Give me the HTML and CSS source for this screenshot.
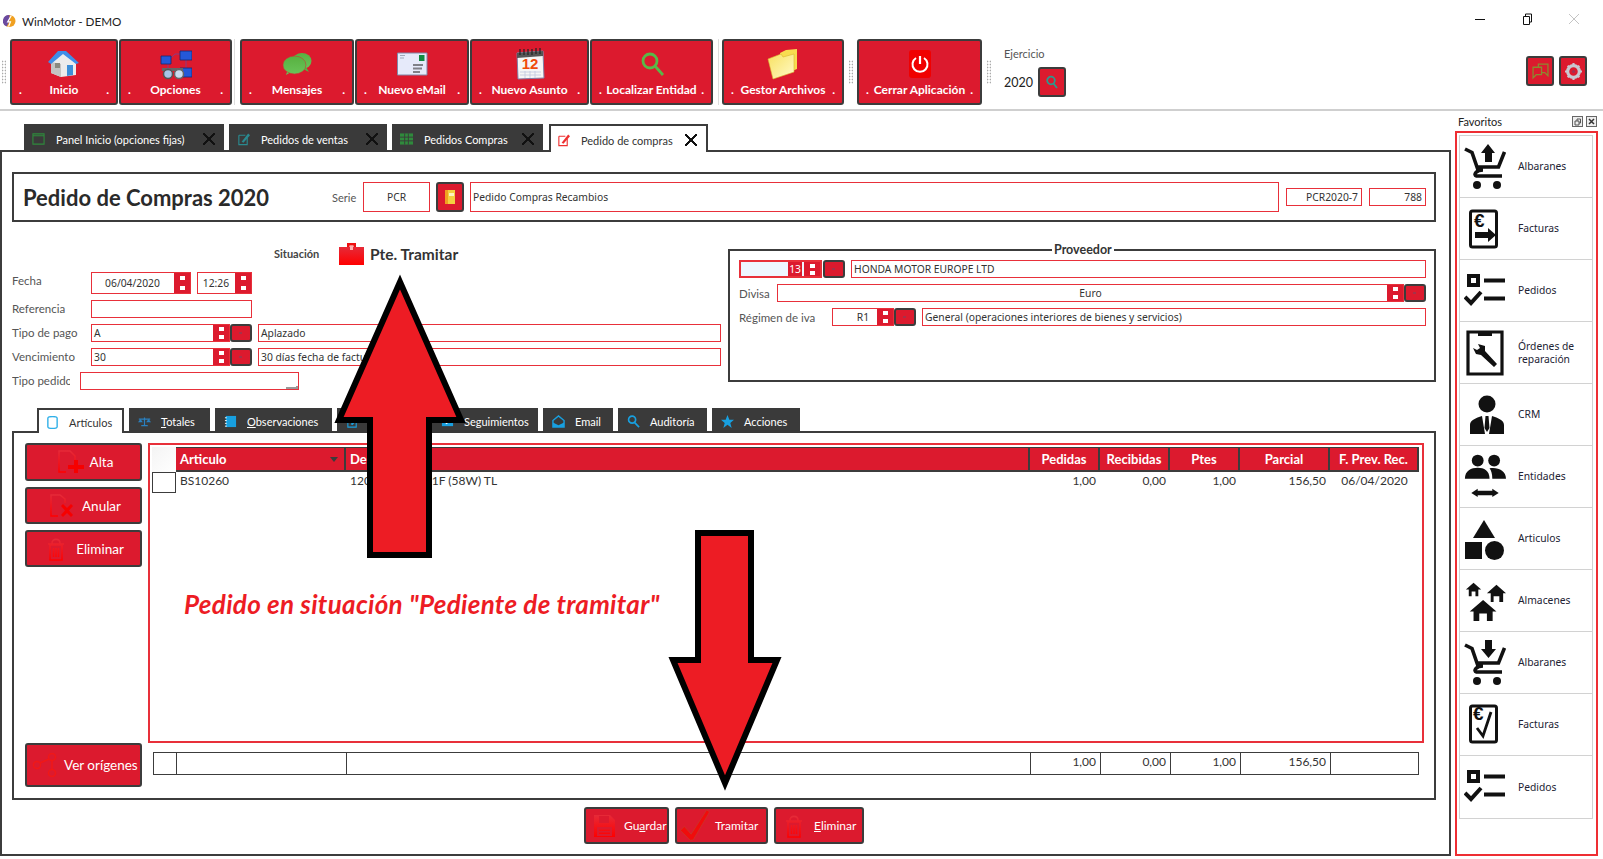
FILE: index.html
```html
<!DOCTYPE html>
<html>
<head lang="es">
    <meta charset="UTF-8">
    <title>WinMotor - DEMO</title>
    <link rel="stylesheet" href="styles.css">
</head>
<body>
<svg class="defs">
    <defs>
        <linearGradient id="redfade" x1="0" y1="0" x2="0" y2="1">
            <stop offset="0" stop-color="#e62a38"/>
            <stop offset="1" stop-color="#ff0000"/>
        </linearGradient>
        <linearGradient id="yellowfade" x1="0" y1="0" x2="1" y2="1">
            <stop offset="0" stop-color="#f8e060"/>
            <stop offset="1" stop-color="#fffbc8"/>
        </linearGradient>
        <linearGradient id="greenfade" x1="0" y1="0" x2="0" y2="1">
            <stop offset="0" stop-color="#58b040"/>
            <stop offset="1" stop-color="#68c458"/>
        </linearGradient>
    </defs>
    <symbol id="cart" viewBox="0 0 42 46">
        <path d="M1 5L8 8.5L14 26M13 23H34.500L40.500 8M19 26C12 26 9 31 12.500 32H38" fill="none" stroke="#111" stroke-width="3.600"/>
        <circle cx="13" cy="41" r="4"/><circle cx="33" cy="41" r="4"/>
    </symbol>
    <symbol id="tasks" viewBox="0 0 42 34">
        <path d="M3 0H16V13H3ZM7 4V9H12V4Z" fill-rule="evenodd"/>
        <path d="M20 4.500H41V8.500H20ZM20 22.500H41V26.500H20Z"/>
        <path d="M1 23L7 29L17 18" fill="none" stroke="#111" stroke-width="4"/>
    </symbol>
    <symbol id="trash" viewBox="0 0 18 24">
        <path d="M3 8H15V23H3ZM1 7H17M5 6.500C5 1 13 1 13 6.500M6.500 11V20M9 11V20M11.500 11V20" fill="none" stroke="url(#redfade)" stroke-width="1.600"/>
    </symbol>
</svg>

<div class="page">
    <div class="titlebar">
        <svg class="appicon" viewBox="0 0 14 14">
            <circle cx="7" cy="7" r="6.500" fill="#f0a020"/>
            <path d="M7 .5A6.500 6.500 0 0 0 4 13L7 7Z" fill="#6a4aa0"/>
            <path d="M9 1L5 8H8L6 13" fill="none" stroke="#fff" stroke-width="1.300"/>
        </svg>
        <span class="apptitle">WinMotor - DEMO</span>
        <div class="winctl">
            <svg viewBox="0 0 12 12"><path d="M1 6.500H11" stroke="#111" stroke-width="1"/></svg>
            <svg viewBox="0 0 12 12"><path d="M2.500 3.500H8.500V11.500H2.500ZM4.500 3.500V1H10.500V9H8.500" fill="none" stroke="#111"/></svg>
            <svg viewBox="0 0 12 12"><path d="M1 1L11 11M11 1L1 11" stroke="#c4c4c4"/></svg>
        </div>
    </div>

    <div class="toolbar">
        <div class="grip first"></div>
        <a class="tbtn w108">
            <svg viewBox="0 0 32 32">
                <path d="M3 14L15 5L28 15V27L13 29L3 25Z" fill="#ececec"/>
                <path d="M13 16V29L3 25V14Z" fill="#c4c4c4"/>
                <path d="M7 15H12V20H7Z" fill="#8a8a80"/>
                <path d="M19 17H25V27L19 28Z" fill="#3d8fd8"/>
                <path d="M0 14L10 3H18L31 15L28 16L15 6L3 16Z" fill="#3f8ee8"/>
            </svg>
            <span class="tlabel"><b>.</b><b>Inicio</b><b>.</b></span>
        </a>
        <a class="tbtn w113">
            <svg viewBox="0 0 32 32">
                <path d="M11 10L15 6H20M8 16V20M26 12V20" fill="none" stroke="#8a3a80"/>
                <path d="M20 3H32V12H20ZM1 8H11V16H1ZM20 20H32V29H20Z" fill="#2458d8" stroke="#182870" stroke-width=".8"/>
                <path d="M2 20H23V23H2Z" fill="#666"/>
                <circle cx="8" cy="26" r="4.500" fill="#a8c4e8" stroke="#555" stroke-width="1.500"/>
                <circle cx="19" cy="26" r="4.500" fill="#c8dcf0" stroke="#666" stroke-width="1.500"/>
            </svg>
            <span class="tlabel"><b>.</b><b>Opciones</b><b>.</b></span>
        </a>
        <div class="sep"></div>
        <a class="tbtn w114">
            <svg viewBox="0 0 32 32">
                <ellipse cx="21" cy="13" rx="9.500" ry="8" fill="url(#greenfade)"/>
                <path d="M25 19L28 24L22 21Z" fill="#58b040"/>
                <path d="M10 24L5 27L7 21Z" fill="#68c458"/>
                <ellipse cx="13.500" cy="17" rx="11.500" ry="9" fill="url(#greenfade)" stroke="#c43a34" stroke-width=".6"/>
            </svg>
            <span class="tlabel"><b>.</b><b>Mensajes</b><b>.</b></span>
        </a>
        <a class="tbtn w114">
            <svg viewBox="0 0 32 32">
                <path d="M1.500 5H31V27H1.500Z" fill="#e6eafa" stroke="#8088a8"/>
                <path d="M23 7H28.500V13H23Z" fill="#128a40"/>
                <path d="M4 7.500H9M4 10H8" stroke="#a0a8b8"/>
                <path d="M17 17H27M17 20.500H26M17 24H24" stroke="#808088" stroke-width="1.800"/>
            </svg>
            <span class="tlabel"><b>.</b><b>Nuevo eMail</b><b>.</b></span>
        </a>
        <a class="tbtn w119">
            <svg viewBox="0 0 32 32">
                <path d="M3 5L29 3L30 30L4 31Z" fill="#f6f6f6" stroke="#8080a8"/>
                <path d="M3 5L29 3V8L3 10Z" fill="#555"/>
                <path d="M6 1V7M10 1V7M14 1V7M18 1V7M22 0V6M26 0V6" stroke="#222" stroke-width="1.200"/>
                <text x="16" y="21" class="caltext">12</text>
                <path d="M6 24H27M6 27H27M11 23V30M16 23V30M21 23V30" stroke="#c0c8e0" stroke-width=".8"/>
            </svg>
            <span class="tlabel"><b>.</b><b>Nuevo Asunto</b><b>.</b></span>
        </a>
        <a class="tbtn w123">
            <svg viewBox="0 0 32 32">
                <circle cx="14" cy="13" r="7" fill="none" stroke="#58b848" stroke-width="2.800"/>
                <path d="M19 18L27 27" stroke="#58b848" stroke-width="2.800"/>
            </svg>
            <span class="tlabel"><b>.</b><b>Localizar Entidad</b><b>.</b></span>
        </a>
        <div class="sep wide"></div>
        <a class="tbtn w122">
            <svg viewBox="0 0 32 32">
                <path d="M13 5L19 2L30 1V21L15 27Z" fill="#f8dc50"/>
                <path d="M1 11L14 6L16 9L27 6V24L6 31Z" fill="url(#yellowfade)" stroke="#d8b830" stroke-width=".6"/>
            </svg>
            <span class="tlabel"><b>.</b><b>Gestor Archivos</b><b>.</b></span>
        </a>
        <div class="grip"></div>
        <a class="tbtn w125">
            <svg viewBox="0 0 32 32">
                <rect x="5" y="2" width="22" height="28" rx="3" fill="#f00000"/>
                <path d="M16 8V16" stroke="#fff" stroke-width="2.200"/>
                <path d="M12 10A7.500 7.500 0 1 0 20 10" fill="none" stroke="#fff" stroke-width="2"/>
            </svg>
            <span class="tlabel"><b>.</b><b>Cerrar Aplicación</b><b>.</b></span>
        </a>
        <div class="grip"></div>
        <div class="ejercicio">
            <span class="ej-label">Ejercicio</span>
            <div class="ej-row">
                <span class="ej-year">2020</span>
                <a class="sbtn">
                    <svg viewBox="0 0 14 14"><circle cx="6" cy="5.500" r="3.800" fill="none" stroke="#2a9a90" stroke-width="1.800"/><path d="M8.500 8.500L12 13" stroke="#2a9a90" stroke-width="1.800"/></svg>
                </a>
            </div>
        </div>
        <div class="tb-right">
            <a class="rbtn">
                <svg viewBox="0 0 16 16"><path d="M1 4H9V11H4L1 14ZM6 4V1H15V12L12 9H9" fill="none" stroke="#8a8a30" stroke-width="1.200"/></svg>
            </a>
            <a class="rbtn">
                <svg viewBox="0 0 16 16">
                    <circle cx="8" cy="8" r="5.500" fill="none" stroke="#c8c8d0" stroke-width="3"/>
                    <circle cx="8" cy="8" r="1.500" fill="#a03050"/>
                    <path d="M8 0V3M8 13V16M0 8H3M13 8H16M2.500 2.500L4.500 4.500M11.500 11.500L13.500 13.500M13.500 2.500L11.500 4.500M4.500 11.500L2.500 13.500" stroke="#c8c8d0" stroke-width="2"/>
                </svg>
            </a>
        </div>
    </div>

    <div class="workspace">
        <div class="main">
            <div class="tabs">
                <a class="tab w200">
                    <svg viewBox="0 0 14 14"><path d="M1 1.500H13V12.500H1ZM1 3.500H13" fill="none" stroke="#2f8a3c" stroke-width="1.200"/></svg>
                    <span>Panel Inicio (opciones fijas)</span><i class="pin"></i>
                </a>
                <a class="tab w158">
                    <svg viewBox="0 0 14 14"><path d="M2 3H9M2 3V13H11V6" fill="none" stroke="#2a8a90" stroke-width="1.200"/><path d="M5 10L12 1L14 3L7 11Z" fill="#2a8a90"/></svg>
                    <span>Pedidos de ventas</span><i class="pin"></i>
                </a>
                <a class="tab w151">
                    <svg viewBox="0 0 14 14"><path d="M0 1H14V13H0Z" fill="#2f8a3c"/><path d="M0 5H14M0 9H14M5 1V13M9 1V13" stroke="#3a3a3a"/></svg>
                    <span>Pedidos Compras</span><i class="pin"></i>
                </a>
                <a class="tab active">
                    <svg viewBox="0 0 14 14"><path d="M2 3H9M2 3V13H11V6" fill="none" stroke="#ee3030" stroke-width="1.200"/><path d="M5 10L12 1L14 3L7 11Z" fill="#ee3030"/></svg>
                    <span>Pedido de compras</span><i class="pin"></i>
                </a>
            </div>

            <div class="panel">
                <div class="docbox">
                    <h1 class="doctitle">Pedido de Compras 2020</h1>
                    <span class="serie">Serie</span>
                    <div class="fld tall center w67">PCR</div>
                    <a class="bookbtn">
                        <svg viewBox="0 0 12 16"><path d="M1 1H11V15H1Z" fill="#f4d040"/><path d="M1 1H4V15H1Z" fill="#f0a020"/><path d="M5 4H10V7H5Z" fill="#fff4c0"/></svg>
                    </a>
                    <div class="fld tall desc">Pedido Compras Recambios</div>
                    <div class="fld right w76">PCR2020-7</div>
                    <div class="fld right w57">788</div>
                </div>

                <div class="formarea">
                    <div class="formleft">
                        <div class="situacion">
                            <span class="sit-label">Situación</span>
                            <svg class="sit-icon" viewBox="0 0 25 23">
                                <path d="M8 5V1H17V5H14.500V3.500H10.500V5Z" fill="#ee1010"/>
                                <path d="M0 5H25V23H0Z" fill="url(#redfade)"/>
                                <path d="M11 4H14V8H11Z" fill="#ffb0b0"/>
                            </svg>
                            <span class="sit-text">Pte. Tramitar</span>
                        </div>
                        <div class="frow date">
                            <label>Fecha</label>
                            <div class="fld center w100">06/04/2020<span class="spin"><i></i><i></i></span></div>
                            <div class="fld center w55">12:26<span class="spin"><i></i><i></i></span></div>
                        </div>
                        <div class="frow">
                            <label>Referencia</label>
                            <div class="fld w161"></div>
                        </div>
                        <div class="frow">
                            <label>Tipo de pago</label>
                            <div class="fld w139">A<span class="spin"><i></i><i></i></span></div>
                            <a class="pick"></a>
                            <div class="fld grow">Aplazado</div>
                        </div>
                        <div class="frow">
                            <label>Vencimiento</label>
                            <div class="fld w139">30<span class="spin"><i></i><i></i></span></div>
                            <a class="pick"></a>
                            <div class="fld grow">30 días fecha de factura</div>
                        </div>
                        <div class="frow">
                            <label class="clip">Tipo pedido</label>
                            <div class="fld w219 combo"><span class="corner"></span></div>
                        </div>
                    </div>

                    <div class="provbox">
                        <span class="provtitle">Proveedor</span>
                        <div class="prow">
                            <div class="fld w83 code"><em>13</em><span class="spin"><i></i><i></i></span></div>
                            <a class="pick"></a>
                            <div class="fld grow">HONDA MOTOR EUROPE LTD</div>
                        </div>
                        <div class="prow">
                            <label class="plabel w38">Divisa</label>
                            <div class="fld grow center">Euro<span class="spin"><i></i><i></i></span></div>
                            <a class="pick"></a>
                        </div>
                        <div class="prow">
                            <label class="plabel w93">Régimen de iva</label>
                            <div class="fld w62 center">R1<span class="spin"><i></i><i></i></span></div>
                            <a class="pick"></a>
                            <div class="fld grow">General (operaciones interiores de bienes y servicios)</div>
                        </div>
                    </div>
                </div>

                <div class="subtabs">
                    <a class="subtab active w87">
                        <svg viewBox="0 0 14 14"><path d="M2 2.500C2 0 12 0 12 2.500V11.500C12 14 2 14 2 11.500Z" fill="none" stroke="#30b0e8" stroke-width="1.500"/></svg>
                        <span>Artículos</span>
                    </a>
                    <a class="subtab w81">
                        <svg viewBox="0 0 16 14"><path d="M8 2V12M4 12H12M1 4H15" stroke="#2a80c0" stroke-width="1.500"/><path d="M0 8H6L3 4ZM10 8H16L13 4Z" fill="#2a80c0"/></svg>
                        <span><u>T</u>otales</span>
                    </a>
                    <a class="subtab w117">
                        <svg viewBox="0 0 14 14"><path d="M2 1H13V13H2Z" fill="#18a0e0"/><path d="M1 3H3M1 6H3M1 9H3M1 12H3" stroke="#fff"/></svg>
                        <span><u>O</u>bservaciones</span>
                    </a>
                    <a class="subtab w90">
                        <svg viewBox="0 0 14 14"><path d="M2 3H9M2 3V13H11V6" fill="none" stroke="#18a0e0" stroke-width="1.200"/><path d="M5 10L12 1L14 3L7 11Z" fill="#18a0e0"/></svg>
                    </a>
                    <a class="subtab w106">
                        <svg viewBox="0 0 14 14"><path d="M1 3H13V12H1Z" fill="#18a0e0"/><path d="M4 8L12 1L14 3L6 10Z" fill="#fff"/></svg>
                        <span>Seguimientos</span>
                    </a>
                    <a class="subtab w70">
                        <svg viewBox="0 0 14 14"><path d="M1 6L7 1L13 6V13H1Z" fill="none" stroke="#18a0e0" stroke-width="1.500"/><path d="M1 8L7 11L13 8V13H1Z" fill="#18a0e0"/></svg>
                        <span>Email</span>
                    </a>
                    <a class="subtab w89">
                        <svg viewBox="0 0 14 14"><circle cx="5.500" cy="5" r="3.800" fill="none" stroke="#18a0e0" stroke-width="1.800"/><path d="M8 8L13 13" stroke="#18a0e0" stroke-width="1.800"/></svg>
                        <span>Auditoría</span>
                    </a>
                    <a class="subtab w88">
                        <svg viewBox="0 0 14 14"><path d="M7 0L9 5H14L10 8.500L11.500 14L7 10.500L2.500 14L4 8.500L0 5H5Z" fill="#18a0e0"/></svg>
                        <span>Acciones</span>
                    </a>
                </div>

                <div class="subpanel">
                    <div class="sideactions">
                        <a class="abtn h38">
                            <svg viewBox="0 0 26 24"><path d="M8 22H1V1H12L17 6V10" fill="none" stroke="url(#redfade)" stroke-width="1.500"/><path d="M16 10H20V15H26V19H20V23H16V19H10V15H16Z" fill="#f60000"/></svg>
                            <span>Alta</span>
                        </a>
                        <a class="abtn h37">
                            <svg viewBox="0 0 24 24" class="ic-anular"><path d="M8 22H1V1H10L15 5V9" fill="none" stroke="url(#redfade)" stroke-width="1.500"/><path d="M11 12L13 10L17 14L21 10L23 12L19 16.500L23 21L21 23L17 19L13 23L11 21L15 16.500Z" fill="#f60000"/></svg>
                            <span>Anular</span>
                        </a>
                        <a class="abtn h37">
                            <svg viewBox="0 0 18 24" class="ic-trash"><use href="#trash"/></svg>
                            <span>Eliminar</span>
                        </a>
                        <a class="abtn h44 origen">
                            <svg viewBox="0 0 24 24"><g fill="none" stroke="#f01818" stroke-width="1.500"><circle cx="4" cy="12" r="3.500"/><circle cx="19" cy="4" r="3.500"/><circle cx="19" cy="20" r="3.500"/><path d="M7 10L16 6M19 8V16"/></g></svg>
                            <span>Ver orígenes</span>
                        </a>
                    </div>
                    <div class="gridcol">
                        <div class="gridbox">
                            <div class="grow-h">
                                <div class="gh corner-h"></div>
                                <div class="gh left sort">Articulo</div>
                                <div class="gh left">Descripción</div>
                                <div class="gh">Pedidas</div>
                                <div class="gh">Recibidas</div>
                                <div class="gh">Ptes</div>
                                <div class="gh">Parcial</div>
                                <div class="gh">F. Prev. Rec.</div>
                            </div>
                            <div class="grow-d">
                                <div class="rowhead"></div>
                                <div class="gd">BS10260</div>
                                <div class="gd">1200MM T8 G 1F (58W) TL</div>
                                <div class="gd num">1,00</div>
                                <div class="gd num">0,00</div>
                                <div class="gd num">1,00</div>
                                <div class="gd num">156,50</div>
                                <div class="gd mid">06/04/2020</div>
                            </div>
                        </div>
                        <div class="gridfoot">
                            <div class="gf"></div>
                            <div class="gf"></div>
                            <div class="gf"></div>
                            <div class="gf num">1,00</div>
                            <div class="gf num">0,00</div>
                            <div class="gf num">1,00</div>
                            <div class="gf num">156,50</div>
                            <div class="gf"></div>
                        </div>
                    </div>
                </div>

                <div class="actions">
                    <a class="bbtn w85 guardar">
                        <svg viewBox="0 0 23 24"><path d="M1 1H17L22 6V23H1ZM6 2V9H16V2ZM4 13V22H19V13ZM6 15.500H17V17H6ZM6 18.500H17V20H6Z" fill="url(#redfade)" fill-rule="evenodd"/></svg>
                        <span>Gu<u>a</u>rdar</span>
                    </a>
                    <a class="bbtn w93 tram">
                        <svg viewBox="0 0 32 34"><path d="M1 22L5 18L12 26L28 1L31 3L14 32H11Z" fill="#f00c0c" stroke="#b84a30" stroke-width=".5"/></svg>
                        <span>Tramitar</span>
                    </a>
                    <a class="bbtn w90 elim">
                        <svg viewBox="0 0 18 24"><use href="#trash"/></svg>
                        <span><u>E</u>liminar</span>
                    </a>
                </div>
            </div>
        </div>

        <div class="favs">
            <div class="favs-head">
                <span>Favoritos</span>
                <div class="favs-ctl">
                    <svg viewBox="0 0 11 11"><rect x=".5" y=".5" width="10" height="10" fill="#eee" stroke="#666"/><path d="M3 5H7V9H3ZM5 5V3H8.500V7H7" fill="none" stroke="#555"/></svg>
                    <svg viewBox="0 0 11 11"><rect x=".5" y=".5" width="10" height="10" fill="#eee" stroke="#666"/><path d="M3 3L8 8M8 3L3 8" stroke="#333" stroke-width="1.500"/></svg>
                </div>
            </div>
            <div class="favs-box">
                <ul class="favlist">
                    <li>
                        <svg viewBox="0 0 42 46"><use href="#cart"/><path d="M24 0L31 9H28V18H21V9H17Z"/></svg>
                        <span>Albaranes</span>
                    </li>
                    <li>
                        <svg viewBox="0 0 42 46">
                            <rect x="6.500" y="5" width="26" height="36" rx="2" fill="none" stroke="#111" stroke-width="3"/>
                            <text x="10" y="21" class="euro">€</text>
                            <path d="M11 26H24V22L32 29L24 36V32H11Z"/>
                        </svg>
                        <span>Facturas</span>
                    </li>
                    <li>
                        <svg viewBox="0 0 42 34" class="small"><use href="#tasks"/></svg>
                        <span>Pedidos</span>
                    </li>
                    <li>
                        <svg viewBox="0 0 42 46">
                            <path d="M4 2H38V44H4Z" fill="none" stroke="#111" stroke-width="3.200"/>
                            <path d="M14 2H28V6H14Z"/>
                            <path d="M14 14L21 16L21 21L33 34L30 37L17 25L12 24L9 18L13 20L16 18Z"/>
                        </svg>
                        <span>Órdenes de<br>reparación</span>
                    </li>
                    <li>
                        <svg viewBox="0 0 42 46">
                            <circle cx="23" cy="12" r="8.500"/>
                            <path d="M6 42V33C6 28 12 26 18 24L21 42ZM40 42V33C40 28 34 26 28 24L25 42ZM21.500 24H24.500L25.500 36L23 40L20.500 36Z"/>
                        </svg>
                        <span>CRM</span>
                    </li>
                    <li>
                        <svg viewBox="0 0 46 50" class="wide">
                            <circle cx="15" cy="7" r="6.500"/><circle cx="33" cy="7" r="6.500"/>
                            <path d="M1 27C1 18 8 15 15 15C22 15 28 18 28 27ZM28 15.500C37 14 46 18 46 27H31C31 22 30 18 28 15.500Z"/>
                            <path d="M15 40H31V38L38 42.500L31 47V45H15V47L8 42.500L15 38Z"/>
                        </svg>
                        <span>Entidades</span>
                    </li>
                    <li>
                        <svg viewBox="0 0 42 46">
                            <path d="M20 4L31 22H9Z"/><path d="M1 26H18V43H1Z"/><circle cx="30.500" cy="34.500" r="9.500"/>
                        </svg>
                        <span>Articulos</span>
                    </li>
                    <li>
                        <svg viewBox="0 0 44 46">
                            <path d="M10 4L18 11H15V18H12V13H8V18H5V11H2Z"/>
                            <path d="M34 6L44 15H41V24H37V18H31V24H28V15H24Z"/>
                            <path d="M20 22L34 34H30V44H24V36H16V44H10V34H6Z"/>
                        </svg>
                        <span>Almacenes</span>
                    </li>
                    <li>
                        <svg viewBox="0 0 42 46"><use href="#cart"/><path d="M21 0H28V9H32L24.500 18L17 9H21Z"/></svg>
                        <span>Albaranes</span>
                    </li>
                    <li>
                        <svg viewBox="0 0 42 46">
                            <rect x="6.500" y="4" width="26" height="36" rx="2" fill="none" stroke="#111" stroke-width="3"/>
                            <text x="9" y="18" class="euro">€</text>
                            <path d="M13 26L19 34L27 10" fill="none" stroke="#111" stroke-width="2.800"/>
                        </svg>
                        <span>Facturas</span>
                    </li>
                    <li>
                        <svg viewBox="0 0 42 34" class="small"><use href="#tasks"/></svg>
                        <span>Pedidos</span>
                    </li>
                </ul>
            </div>
        </div>
    </div>

    <!-- marcas de la captura por encima de la ventana -->
    <svg class="marks" viewBox="0 0 1603 859">
        <polygon points="400,282 461,420 429,420 429,555 370,555 370,420 339,420"/>
        <polygon points="698,533 751,533 751,660 777,660 725,783 673,660 698,660"/>
    </svg>
    <div class="note">Pedido en situación "Pediente de tramitar"</div>
</div>
</body>
</html>
```

FILE: styles.css
```css
*{
    margin: 0;
    padding: 0;
    box-sizing: border-box;
}
body{
    font-family: "Lato", "Liberation Sans", sans-serif;
    font-size: 12px;
    color: #333;
    background: white;
    overflow: hidden;
}
ul{
    list-style: none;
}
a{
    display: block;
}
/* display:none aqui rompe el degradado */
.defs{
    position: absolute;
    width: 0;
    height: 0;
}
.page{
    position: relative;
    width: 1603px;
    height: 859px;
    overflow: hidden;
}

/* barra de titulo */
.titlebar{
    display: flex;
    align-items: center;
    height: 39px;
    padding: 2px 0 0 3px;
}
.appicon{
    width: 13px;
    height: 14px;
    margin-right: 6px;
}
.apptitle{
    color: #222;
    font-size: 11.700px;
}
.winctl{
    display: flex;
    gap: 35px;
    margin-left: auto;
    margin-right: 23px;
    margin-top: -3px;
}
.winctl svg{
    width: 12px;
    height: 12px;
}

/* barra de botones */
.toolbar{
    display: flex;
    height: 72px;
    padding-left: 10px;
    border-bottom: 2px solid #cfcfcf;
}
.grip{
    width: 12px;
    height: 24px;
    margin-top: 21px;
    background: radial-gradient(#aaa 40%, transparent 50%) 0 0 / 3px 3px;
    background-clip: content-box;
    padding: 0 4px;
}
.grip.first{
    position: absolute;
    left: -2px;
    top: 60px;
    margin: 0;
}
.sep{
    width: 7px;
    height: 66px;
    background: linear-gradient(#ddd, #ddd) 1px 0 / 1px 100% no-repeat;
}
.sep.wide{
    width: 8px;
    background-position: 4px 0;
}
.tbtn{
    height: 66px;
    margin-right: 1px;
    padding: 7px 7px 0;
    background: #dc1a2e;
    border: 2px solid #3c3c3c;
    border-radius: 3px;
    text-align: center;
}
.tbtn svg{
    display: block;
    width: 32px;
    height: 32px;
    margin: 0 auto;
}
.tlabel{
    display: flex;
    justify-content: space-between;
    margin-top: 2px;
    color: white;
    font-size: 12px;
    white-space: nowrap;
}
.w108{ width: 108px; }
.w113{ width: 113px; }
.w114{ width: 114px; }
.w119{ width: 119px; }
.w123{ width: 123px; }
.w122{ width: 122px; }
.w125{ width: 125px; }
.caltext{
    font: bold 15px "Liberation Sans", sans-serif;
    fill: #f04a0a;
    text-anchor: middle;
}
.ejercicio{
    margin-left: 9px;
    padding-top: 8px;
}
.ej-label{
    display: block;
    font-size: 11px;
    color: #555;
}
.ej-row{
    display: flex;
    align-items: center;
    gap: 5px;
    margin-top: 7px;
}
.ej-year{
    font-size: 12.500px;
    color: #222;
}
.sbtn, .rbtn{
    display: flex;
    align-items: center;
    justify-content: center;
    height: 30px;
    background: #dc1a2e;
    border: 2px solid #3c3c3c;
    border-radius: 3px;
}
.sbtn{
    width: 28px;
}
.sbtn svg{
    width: 14px;
    height: 14px;
}
.tb-right{
    display: flex;
    gap: 5px;
    margin-left: auto;
    margin-right: 16px;
    padding-top: 17px;
}
.rbtn{
    width: 28px;
}
.rbtn svg{
    width: 17px;
    height: 17px;
}

/* zona de trabajo */
.workspace{
    display: flex;
    height: 748px;
}
.main{
    width: 1451px;
    padding-top: 13px;
}
.tabs{
    display: flex;
    position: relative;
    z-index: 1;
    height: 28px;
    margin-bottom: -2px;
    padding-left: 24px;
    gap: 5px;
}
.tab{
    display: flex;
    align-items: center;
    background: #3a3a3a;
    color: white;
    font-size: 11px;
    padding: 2px 9px 0 8px;
}
.tab svg{
    width: 13px;
    height: 14px;
    margin-right: 11px;
    flex: none;
}
.tab .pin{
    width: 12px;
    height: 12px;
    margin-left: auto;
    background:
        linear-gradient(45deg, transparent 43%, #111 43%, #111 57%, transparent 57%),
        linear-gradient(-45deg, transparent 43%, #111 43%, #111 57%, transparent 57%);
}
.w200{ width: 200px; }
.w158{ width: 158px; }
.w151{ width: 151px; }
.tab.active{
    width: 159px;
    margin-left: 1px;
    background: white;
    color: #333;
    border: 2px solid #3c3c3c;
    border-bottom: none;
    padding-left: 6px;
}
.panel{
    height: 706px;
    padding: 20px 13px 0 10px;
    border: 2px solid #3c3c3c;
}

.docbox{
    display: flex;
    align-items: center;
    height: 50px;
    padding-left: 9px;
    border: 2px solid #3c3c3c;
}
.doctitle{
    width: 309px;
    font-size: 22px;
    font-weight: bold;
    color: #2a2a2a;
    white-space: nowrap;
}
.serie{
    width: 31px;
    font-size: 11px;
    color: #555;
}

/* campos */
.fld{
    position: relative;
    display: flex;
    align-items: center;
    flex: none;
    height: 18px;
    padding: 0 2px;
    border: 1px solid #e8303a;
    font-family: "Noto Sans", "Liberation Sans", sans-serif;
    font-size: 10.300px;
    color: #333;
    white-space: nowrap;
    overflow: hidden;
}
.fld.grow{
    flex: 1;
}
.fld.tall{
    height: 30px;
}
.fld.center{
    justify-content: center;
}
.fld.right{
    justify-content: flex-end;
    padding-right: 3px;
}
.fld.desc{
    flex: 1;
    margin: 0 7px 0 6px;
}
.fld.w76{
    margin-right: 7px;
}
.w67{ width: 67px; }
.w76{ width: 76px; }
.w57{ width: 57px; }
.w100{ width: 100px; }
.w55{ width: 55px; }
.w161{ width: 161px; }
.w139{ width: 139px; }
.w219{ width: 219px; }
.w83{ width: 83px; }
.w62{ width: 62px; }
.docbox .fld.w57{
    margin-right: 8px;
}
.bookbtn{
    display: flex;
    align-items: center;
    justify-content: center;
    width: 28px;
    height: 30px;
    margin-left: 6px;
    background: #dc1a2e;
    border: 2px solid #3c3c3c;
    border-radius: 3px;
}
.bookbtn svg{
    width: 12px;
    height: 16px;
}
.spin{
    position: absolute;
    right: 0;
    top: 0;
    bottom: 0;
    display: flex;
    flex-direction: column;
    align-items: center;
    justify-content: space-around;
    width: 16px;
    background: #dc1a2e;
}
.spin i{
    width: 5px;
    height: 4px;
    background: white;
}
.pick{
    position: relative;
    flex: none;
    width: 22px;
    height: 18px;
    background: #dc1a2e;
    border: 2px solid #3c3c3c;
    border-radius: 3px;
}
.pick:after{
    content: "";
    position: absolute;
    left: 7px;
    top: 6px;
    width: 3px;
    height: 2px;
    background: #a83048;
}

.formarea{
    display: flex;
    height: 186px;
}
.formleft{
    width: 716px;
    flex: none;
    padding-right: 7px;
}
.situacion{
    display: flex;
    align-items: center;
    height: 23px;
    margin: 19px 0 8px;
    padding: 2px 0 0 262px;
}
.sit-label{
    width: 65px;
    font-size: 11px;
    font-weight: bold;
    color: #444;
}
.sit-icon{
    width: 25px;
    height: 23px;
    margin-right: 6px;
}
.sit-text{
    font-size: 15.500px;
    font-weight: bold;
    color: #333;
}
.frow{
    display: flex;
    align-items: center;
    margin-bottom: 6px;
}
.frow label{
    width: 79px;
    flex: none;
    padding-bottom: 2px;
    font-size: 11.500px;
    color: #555;
    white-space: nowrap;
}
.frow label.clip{
    width: 58px;
    margin-right: 10px;
    overflow: hidden;
}
.frow .pick{
    margin-right: 6px;
}
.frow.date{
    height: 22px;
    gap: 6px;
}
.frow.date label{
    margin-right: -6px;
    padding-bottom: 6px;
}
.frow.date .fld{
    height: 22px;
    padding-right: 19px;
}
.combo .corner{
    position: absolute;
    right: 0;
    bottom: 0;
    width: 12px;
    height: 3px;
    border-right: 2px solid #999;
    border-bottom: 2px solid #999;
}
.provbox{
    position: relative;
    flex: none;
    width: 708px;
    height: 133px;
    margin-top: 27px;
    padding: 9px 8px 0 9px;
    border: 2px solid #3c3c3c;
}
.provtitle{
    position: absolute;
    top: -9px;
    left: 322px;
    padding: 0 2px;
    background: white;
    font-size: 12.500px;
    font-weight: bold;
    color: #333;
}
.prow{
    display: flex;
    align-items: center;
    height: 18px;
    margin-bottom: 6px;
}
.fld.code + .pick{
    margin-left: 1px;
}
.prow .fld.grow:not(.center){
    margin-left: 6px;
}
.fld.code{
    background: #eef6ff;
    justify-content: flex-end;
    padding-right: 18px;
    border-width: 2px;
}
.fld.code em{
    padding: 0 1px;
    background: #dc1a2e;
    color: white;
    font-style: normal;
}
.plabel{
    flex: none;
    font-size: 11.500px;
    color: #555;
    white-space: nowrap;
}
.w38{ width: 38px; }
.w93{ width: 93px; }

/* pestañas de detalle */
.subtabs{
    display: flex;
    position: relative;
    z-index: 1;
    gap: 5px;
    height: 25px;
    margin-bottom: -2px;
    padding-left: 25px;
}
.subtab{
    display: flex;
    align-items: center;
    padding: 2px 0 0 9px;
    background: #3a3a3a;
    color: white;
    font-size: 11px;
    white-space: nowrap;
}
.subtab svg{
    width: 13px;
    height: 13px;
    margin-right: 10px;
    flex: none;
}
.subtab.active{
    background: white;
    color: #333;
    border: 2px solid #3c3c3c;
    border-bottom: none;
    padding-left: 7px;
}
.w87{ width: 87px; }
.w81{ width: 81px; }
.w117{ width: 117px; }
.w90{ width: 90px; }
.w106{ width: 106px; }
.w70{ width: 70px; }
.w89{ width: 89px; }
.w88{ width: 88px; }
.w85{ width: 85px; }
.subpanel{
    display: flex;
    height: 369px;
    padding: 10px 10px 11px 11px;
    border: 2px solid #3c3c3c;
}
.sideactions{
    display: flex;
    flex-direction: column;
    gap: 6px;
    width: 117px;
    flex: none;
    margin-right: 6px;
}
.abtn{
    display: flex;
    align-items: center;
    justify-content: center;
    padding-left: 4px;
    background: #dc1a2e;
    border: 2px solid #3c3c3c;
    border-radius: 3px;
    color: white;
    font-size: 13.500px;
    white-space: nowrap;
}
.abtn svg{
    width: 26px;
    height: 24px;
    margin-right: 6px;
}
.abtn svg.ic-anular{
    width: 24px;
    margin-right: 8px;
}
.abtn svg.ic-trash{
    width: 18px;
    margin-right: 11px;
}
.h38{ height: 38px; }
.h37{ height: 37px; }
.h44{ height: 44px; }
.abtn.origen{
    margin-top: auto;
    justify-content: flex-start;
    padding-left: 5px;
}
.gridcol{
    flex: 1;
}
.gridbox{
    height: 300px;
    padding: 2px;
    border: 2px solid #e8303a;
    margin-bottom: 9px;
}
.grow-h, .grow-d, .gridfoot{
    display: grid;
    grid-template-columns: 24px 170px 684px 70px 70px 70px 90px 89px;
}
.grow-h{
    height: 25px;
}
.gh{
    display: flex;
    align-items: center;
    justify-content: center;
    background: #dc1a2e;
    border: solid #3c3c3c;
    border-width: 1px 2px 2px 0;
    color: white;
    font-weight: bold;
    font-size: 13px;
    white-space: nowrap;
}
.gh.left{
    justify-content: flex-start;
    padding-left: 4px;
}
.gh.corner-h{
    background: linear-gradient(135deg, #f4f4f4, white);
    border: none;
}
.gh.sort{
    position: relative;
}
.gh.sort:after{
    content: "";
    position: absolute;
    right: 6px;
    top: 9px;
    border: 4px solid transparent;
    border-top: 5px solid #3c3c3c;
    border-bottom: none;
}
.grow-d{
    height: 21px;
}
.rowhead{
    border: 1px solid #3c3c3c;
}
.gd{
    padding: 1px 4px 0;
    font-size: 12px;
    color: #333;
    white-space: nowrap;
}
.gd.num, .gf.num{
    text-align: right;
}
.gd.mid{
    text-align: center;
    padding: 1px 0 0;
}
.gridfoot{
    grid-template-columns: 23px 170px 684px 70px 70px 70px 90px 89px;
    height: 23px;
    margin-left: 5px;
    width: 1266px;
    border: solid #3c3c3c;
    border-width: 1px 1px 1px 0;
}
.gf{
    padding: 1px 4px 0;
    border-left: 1px solid #3c3c3c;
    font-size: 12px;
}

.actions{
    display: flex;
    justify-content: center;
    gap: 6px;
    margin-top: 7px;
}
.bbtn{
    display: flex;
    align-items: center;
    height: 37px;
    background: #dc1a2e;
    border: 2px solid #3c3c3c;
    border-radius: 3px;
    color: white;
    font-size: 12px;
    white-space: nowrap;
}
.bbtn svg{
    flex: none;
}
.guardar{
    padding-left: 7px;
}
.guardar svg{
    width: 23px;
    height: 24px;
    margin-right: 8px;
}
.tram{
    padding-left: 2px;
}
.tram svg{
    width: 32px;
    height: 33px;
    margin-right: 4px;
}
.elim{
    padding-left: 9px;
}
.elim svg{
    width: 18px;
    height: 24px;
    margin-right: 11px;
}

/* favoritos */
.favs{
    flex: 1;
    padding: 0 5px 3px 4px;
}
.favs-head{
    display: flex;
    align-items: center;
    justify-content: space-between;
    height: 20px;
    padding: 1px 1px 1px 3px;
    font-size: 11px;
    color: #222;
}
.favs-ctl{
    display: flex;
    gap: 3px;
}
.favs-ctl svg{
    width: 11px;
    height: 11px;
}
.favs-box{
    height: 725px;
    padding: 2px;
    border: 2px solid #ee2e33;
}
.favlist{
    border: 1px solid #d2d2d2;
    margin-right: 1px;
}
.favlist li{
    display: flex;
    align-items: center;
    height: 62px;
    padding-left: 4px;
    border-bottom: 1px solid #d2d2d2;
    font-family: "Noto Sans", "Liberation Sans", sans-serif;
    font-size: 10.300px;
    line-height: 13px;
    color: #223;
}
.favlist li:last-child{
    border-bottom: none;
}
.favlist svg{
    width: 42px;
    height: 46px;
    margin-right: 12px;
    flex: none;
    fill: #111;
}
.favlist svg.small{
    height: 34px;
}
.favlist svg.wide{
    height: 50px;
}
.euro{
    font: bold 19px "Liberation Sans", sans-serif;
    fill: #111;
}

/* flechas y nota */
.marks{
    position: absolute;
    z-index: 2;
    left: 0;
    top: 0;
    width: 1603px;
    height: 859px;
    pointer-events: none;
}
.marks polygon{
    fill: #ed1c24;
    stroke: black;
    stroke-width: 6;
    stroke-miterlimit: 10;
}
.note{
    position: absolute;
    z-index: 2;
    left: 184px;
    top: 588px;
    color: #ed1c24;
    font-size: 26px;
    letter-spacing: .3px;
    font-weight: bold;
    font-style: italic;
    white-space: nowrap;
}
```
